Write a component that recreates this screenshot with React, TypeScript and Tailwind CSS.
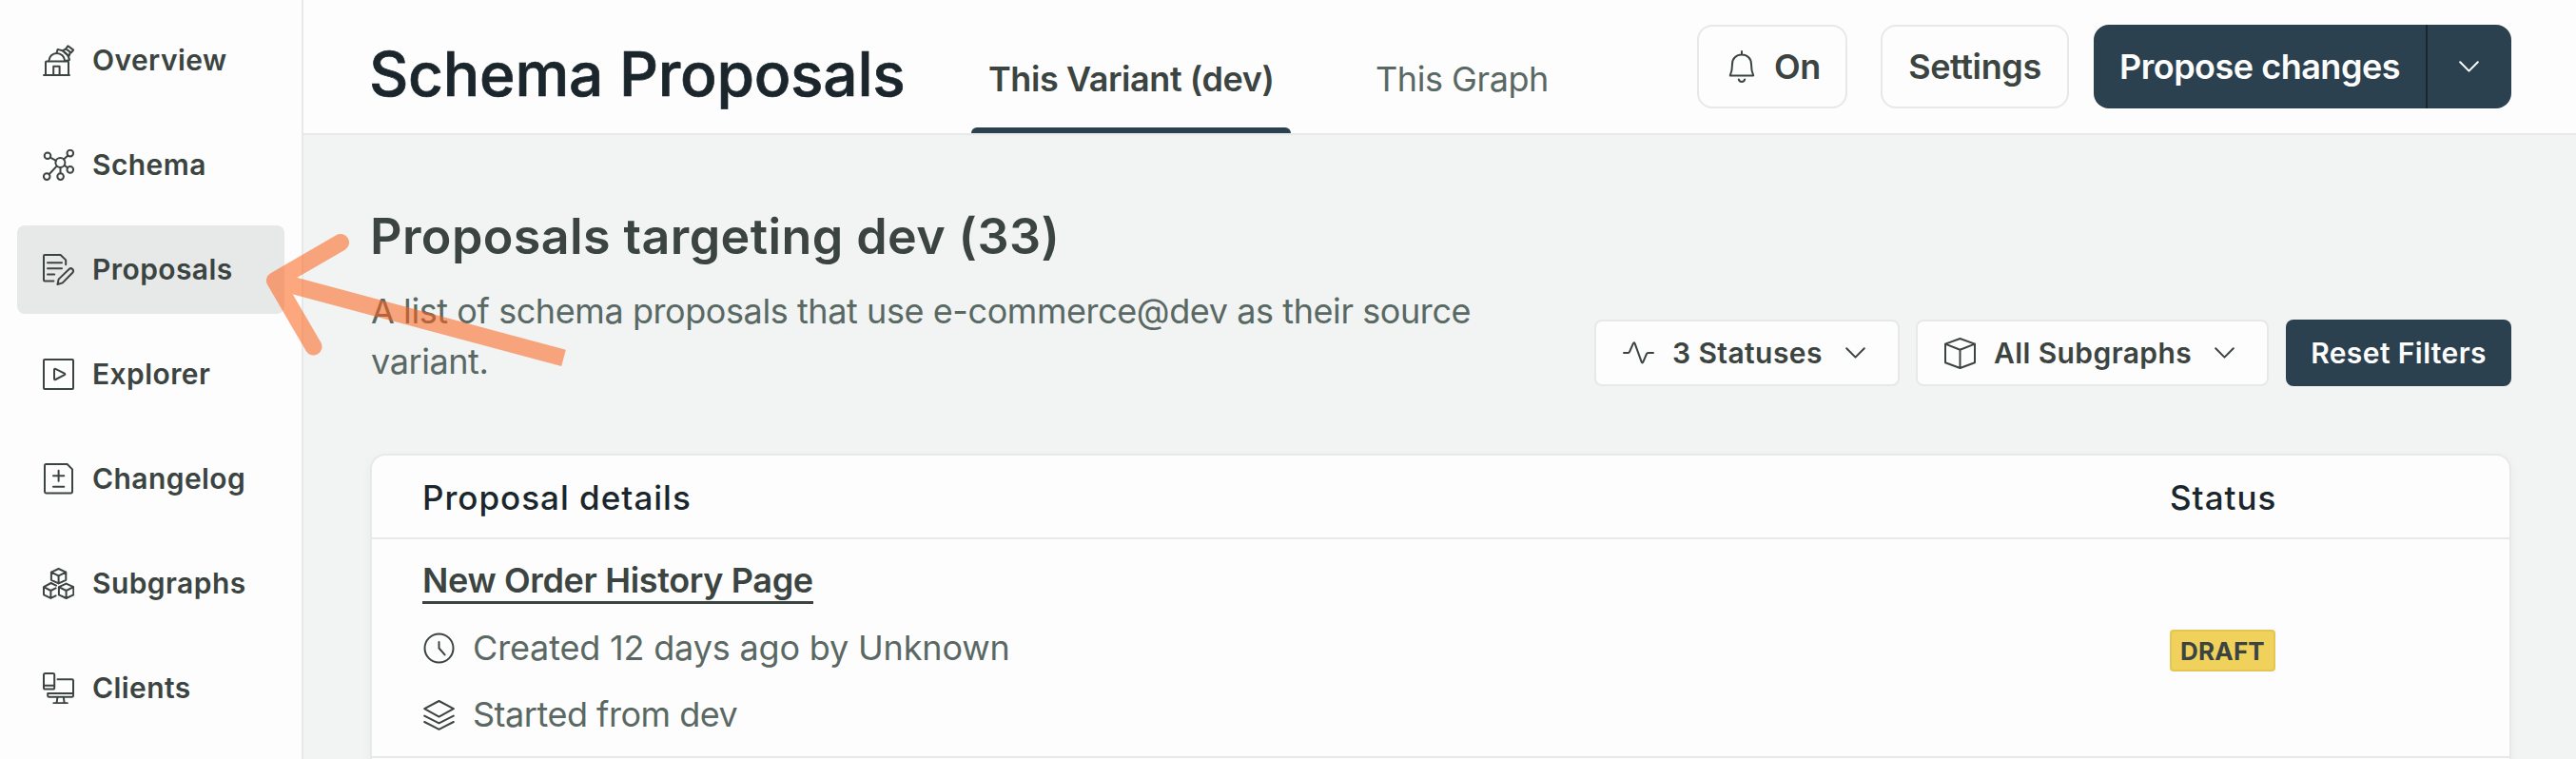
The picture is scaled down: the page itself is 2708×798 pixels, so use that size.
import type { ReactNode } from "react";

type IconProps = { w?: number; h?: number; sw?: number; className?: string; children: ReactNode };

function Icon({ w = 33, h = 33, sw = 2, className = "", children }: IconProps) {
  return (
    <svg
      width={w}
      height={h}
      viewBox={`0 0 ${w} ${h}`}
      fill="none"
      stroke="currentColor"
      strokeWidth={sw}
      strokeLinecap="round"
      strokeLinejoin="round"
      className={`shrink-0 ${className}`}
    >
      {children}
    </svg>
  );
}

const ObservatoryIcon = () => (
  <Icon>
    <path d="M1 32H28M3 32V18.5a1 1 0 0 1 1-1H26a1 1 0 0 1 1 1V32" />
    <path d="M11.2 32V22.7H17.6V32" />
    <path d="M6.3 17.3C6.6 12.4 10.2 8.9 14.7 8.9S22.9 12.4 23.3 17.3" />
    <path d="M14.6 8.6 15.6 4.9 20.6 6.2C24.6 8.6 27.3 11.6 28 16L24 16.9" />
    <path d="M21 6.2 24 4.6M27.8 11.6 28.6 8.6M22.6 8.2 27 11.4" />
    <path d="M26.4 1.2 32.2 5.6 29.8 8.4 24.2 4.4Z" />
  </Icon>
);

const SchemaIcon = () => (
  <Icon>
    <circle cx="18.4" cy="14" r="5" />
    <circle cx="5" cy="6.8" r="3.3" />
    <circle cx="28.8" cy="4.1" r="3.3" />
    <circle cx="28.8" cy="21.4" r="3.3" />
    <circle cx="18.6" cy="28.6" r="3.3" />
    <circle cx="4.2" cy="28.6" r="3.3" />
    <path d="M8 8.7 13.9 11.8M22 10.6 26.4 6.5M22.8 16.9 25.9 19.2M18.5 19.2V25.2M6.6 26.2 14.7 17.6" />
  </Icon>
);

const ProposalsIcon = () => (
  <Icon>
    <path d="M11.4 28.4H2a1 1 0 0 1-1-1V2a1 1 0 0 1 1-1H18.6L24.2 6.4V11.2" />
    <path d="M5 9.3H20M5 15.3H20M5 21.5H12.2" />
    <path d="M15.5 32 16.6 26.6 27.6 16C28.7 15 30.2 15 31.2 16 32.3 17.1 32.3 18.5 31.2 19.7L20.8 30.4Z" />
  </Icon>
);

const ExplorerIcon = () => (
  <Icon>
    <rect x="1" y="1" width="31" height="31" rx="1" />
    <path d="M12 11.6C12 10.8 12.7 10.4 13.4 10.8L22.8 15.6C23.5 16 23.5 16.8 22.8 17.2L13.4 22C12.7 22.4 12 22 12 21.2Z" />
  </Icon>
);

const ChangelogIcon = () => (
  <Icon>
    <path d="M3.2 1H25.6L31 6.4V30a1.4 1.4 0 0 1-1.4 1.4H3.4A1.4 1.4 0 0 1 2 30V2.4A1.4 1.4 0 0 1 3.2 1Z" />
    <path d="M11 13.3H22.3M16.6 7.8V18.8M11 24.8H22.3" />
  </Icon>
);

const cube = "M16.6 1 24.3 4.6V12.8L16.6 16.4 8.9 12.8V4.6ZM8.9 4.6 16.6 8.4 24.3 4.6M16.6 8.4V16.4";

const SubgraphsIcon = () => (
  <Icon>
    <path d={cube} />
    <path d="M14 18.6 8.6 16 1 20.2V28.3L8.4 31.9 13.6 29.4M1 20.2 8.4 24 13.6 21.4M8.4 24V31.9" />
    <path d={cube} transform="translate(8 15.6)" />
  </Icon>
);

const ClientsIcon = () => (
  <Icon>
    <rect x="1" y="1" width="11.2" height="16.6" rx="1.6" />
    <path d="M1 13.8H12M15.5 7.2H30.6a1.4 1.4 0 0 1 1.4 1.4V24.4A1.4 1.4 0 0 1 30.6 25.8H6.6A1.4 1.4 0 0 1 5.2 24.4V22H32" />
    <path d="M15.4 26.2 14.6 32M21.9 26.2 22.6 32M11.4 32.2H25.8" />
  </Icon>
);

const Chevron = ({ className = "" }: { className?: string }) => (
  <Icon w={21} h={12} className={className}>
    <path d="M1.2 1.2 10.5 10.6 19.8 1.2" />
  </Icon>
);

const navItems = [
  { label: "Overview", icon: <ObservatoryIcon /> },
  { label: "Schema", icon: <SchemaIcon /> },
  { label: "Proposals", icon: <ProposalsIcon />, active: true },
  { label: "Explorer", icon: <ExplorerIcon /> },
  { label: "Changelog", icon: <ChangelogIcon /> },
  { label: "Subgraphs", icon: <SubgraphsIcon /> },
  { label: "Clients", icon: <ClientsIcon /> },
];

function Sidebar() {
  return (
    <nav className="flex w-[319px] shrink-0 flex-col gap-[17px] border-r-2 border-[#e7e9e8] bg-[#fdfdfd] px-[18px] pt-[17px]">
      {navItems.map((item) => (
        <a
          key={item.label}
          className={`flex h-[93px] shrink-0 items-center gap-[19px] rounded-lg pl-[27px] text-[30px] font-semibold tracking-[0.42px] ${
            item.active ? "bg-[#e7e9e8]" : ""
          }`}
        >
          {item.icon}
          {item.label}
        </a>
      ))}
    </nav>
  );
}

function Header() {
  return (
    <header className="flex h-[142px] shrink-0 items-center border-b-2 border-[#e7e9e8] bg-[#fdfdfd] pr-[68px] pl-[69px]">
      <h1 className="w-[633px] pt-[15px] text-[64px] leading-[80px] font-medium tracking-[-0.25px] whitespace-nowrap text-[#1b262c] [-webkit-text-stroke:0.7px_#1b262c]">
        Schema Proposals
      </h1>
      <div className="flex gap-[71px] self-stretch text-[36px] tracking-[-0.43px] whitespace-nowrap">
        <div className="flex w-[336px] flex-col justify-between pt-[56px] font-semibold">
          <span className="pl-[18px] leading-[54px]">This Variant (dev)</span>
          <span className="h-[6px] rounded-t-[8px] bg-[#2c414f]" />
        </div>
        <div className="pt-[56px] pl-[18px] leading-[54px] tracking-[-0.45px] text-[#5a6864]">This Graph</div>
      </div>
      <div className="ml-auto flex text-[36px] font-semibold tracking-[-0.4px]">
        <button className="flex h-[88px] w-[158px] items-center rounded-[16px] border-2 border-[#e7e9e8] pl-[31px]">
          <Icon w={28} h={34}>
            <path d="M14 1V4.4M4 14.4C4 8.4 8.2 4.6 14 4.6S24 8.4 24 14.4C24 20.2 24.6 22.8 26.2 26.4H1.8C3.4 22.8 4 20.2 4 14.4Z" />
            <path d="M10.8 30.4C11.4 32.4 12.6 33 14 33S16.6 32.4 17.2 30.4" />
          </Icon>
          <span className="pl-[20px]">On</span>
        </button>
        <button className="ml-[35px] h-[88px] w-[198px] rounded-[16px] border-2 border-[#e7e9e8]">Settings</button>
        <div className="ml-[26px] flex h-[88px] w-[439px] overflow-hidden rounded-[16px] bg-[#2c414f] text-[#fdfdfd]">
          <button className="w-[351px] border-r-2 border-[#1b262c] tracking-[-0.5px] whitespace-nowrap">
            Propose changes
          </button>
          <button className="flex flex-1 items-center justify-center pr-[2px]">
            <Chevron />
          </button>
        </div>
      </div>
    </header>
  );
}

function Intro() {
  return (
    <section className="flex items-end justify-between">
      <div className="w-[1216px]">
        <h2 className="-ml-px text-[52px] leading-[64px] font-semibold tracking-[0.4px]">
          Proposals targeting dev (33)
        </h2>
        <p className="mt-[20px] -mb-px text-[36px] leading-[53px] tracking-[-0.42px] text-[#5a6864]">
          A list of schema proposals that use e-commerce@dev as their source variant.
        </p>
      </div>
      <div className="flex text-[30px] font-semibold tracking-[0.4px]">
        <button className="flex h-[70px] w-[321px] items-center rounded-lg border-2 border-[#e7e9e8] bg-[#fdfdfd] pr-[34px] pl-[28px]">
          <Icon h={24}>
            <path d="M1 12H5.6Q6.6 12 7 11L10.8 2.4Q11.9 .2 12.8 2.6L19.6 21.4Q20.4 23.6 21.4 21.4L25 13Q25.5 12 26.6 12H32" />
          </Icon>
          <span className="pl-[19px]">3 Statuses</span>
          <Chevron className="ml-auto" />
        </button>
        <button className="ml-[17px] flex h-[70px] w-[371px] items-center rounded-lg border-2 border-[#e7e9e8] bg-[#fdfdfd] pr-[34px] pl-[28px]">
          <Icon>
            <path d="M16.5 1 32 6.6V26.2L16.5 32 1 26.2V6.6ZM1 6.6 16.5 12.8 32 6.6M16.5 12.8V32" />
          </Icon>
          <span className="pl-[19px]">All Subgraphs</span>
          <Chevron className="ml-auto" />
        </button>
        <button className="ml-[18px] h-[70px] w-[237px] rounded-lg bg-[#2c414f] text-[#fdfdfd]">Reset Filters</button>
      </div>
    </section>
  );
}

function ProposalsTable() {
  return (
    <section className="mt-[71px] -ml-px h-[400px] rounded-[16px] border-2 border-[#e7e9e8] bg-[#fdfdfd] shadow-[0_4px_12px_rgba(0,0,0,0.04)]">
      <div className="grid h-[88px] grid-cols-[1837px_1fr] items-center border-b-2 border-[#e7e9e8] pt-[2px] pl-[53px] text-[35px] font-medium tracking-[1px] text-[#1b262c]">
        <span>Proposal details</span>
        <span>Status</span>
      </div>
      <div className="grid h-[230px] grid-cols-[1837px_1fr] items-center border-b-2 border-[#e7e9e8] pl-[53px]">
        <div className="self-start pt-[18px] text-[36px]">
          <a className="block h-[50px] w-fit border-b-3 border-[#3b4441] leading-[50px] font-semibold tracking-[-0.35px]">
            New Order History Page
          </a>
          <div className="mt-[18px] flex h-[56px] items-center gap-[19px] tracking-[-0.17px]">
            <Icon className="ml-px">
              <circle cx="16.5" cy="16.5" r="15" />
              <path d="M16.5 10V16.5L22.6 23.4" />
            </Icon>
            <span className="text-[#5a6864]">Created 12 days ago by Unknown</span>
          </div>
          <div className="mt-[14px] flex h-[56px] items-center gap-[19px] tracking-[-0.48px]">
            <Icon className="ml-px">
              <path d="M16.5 2 31.8 10.2 16.5 18.6 1.2 10.2ZM1.2 17.6 16.5 25.4 31.8 17.6M1.2 24 16.5 31.8 31.8 24" />
            </Icon>
            <span className="text-[#5a6864]">Started from dev</span>
          </div>
        </div>
        <span className="mt-[6px] flex h-[44px] w-[111px] items-center justify-center rounded-[4px] border-2 border-[#e3c654] bg-[#efd15c] text-[26px] font-bold tracking-[0.2px]">
          DRAFT
        </span>
      </div>
    </section>
  );
}

export default function App() {
  return (
    <div className="relative flex h-[798px] w-[2708px] overflow-hidden bg-[#f1f4f3] font-['Inter',sans-serif] text-[#3b4441]">
      <Sidebar />
      <div className="flex min-w-0 flex-1 flex-col">
        <Header />
        <main className="pt-[75px] pr-[68px] pl-[71px]">
          <Intro />
          <ProposalsTable />
        </main>
      </div>
      <svg
        className="pointer-events-none absolute top-[236px] left-[270px] opacity-55"
        width="340"
        height="160"
        viewBox="270 236 340 160"
        fill="none"
        stroke="#fd611a"
        strokeWidth="18"
        strokeLinejoin="round"
      >
        <path d="M358 255 289 295 329.500 364.500" strokeLinecap="round" />
        <path d="M289 295 592.500 376.400" />
      </svg>
    </div>
  );
}
